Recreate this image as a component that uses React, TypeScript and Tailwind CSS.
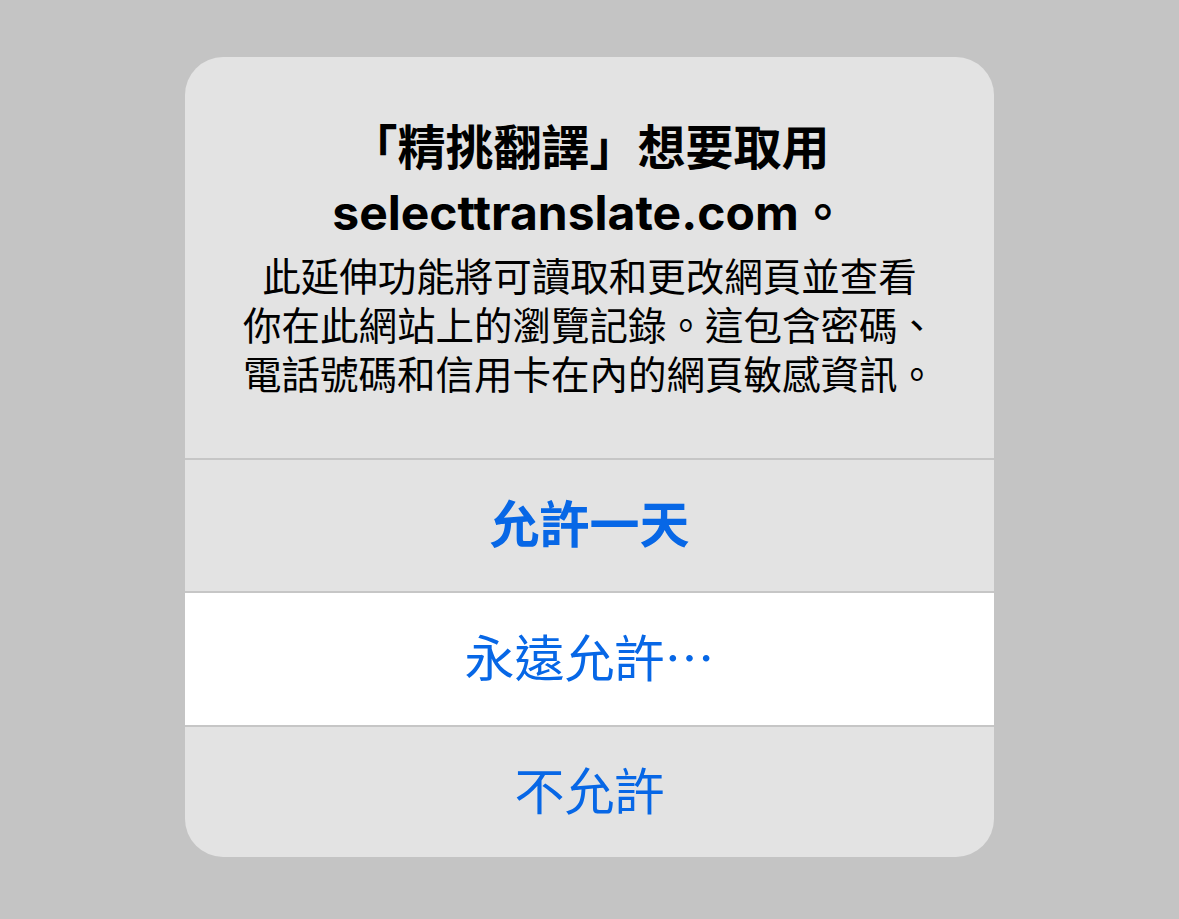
export default function App() {
  const font = { fontFamily: 'Inter, "Noto Sans CJK TC", sans-serif' };
  return (
    <div className="min-h-screen w-full bg-[#c4c4c4] flex justify-center pt-[57px]" style={font}>
      <div className="w-[809px] h-[800px] rounded-[38px] bg-[#e3e3e3] overflow-hidden flex flex-col">
        {/* Message */}
        <div className="px-6 pt-[58px] pb-[58px] text-center text-black">
          <h1 className="text-[48px] leading-[65px] font-bold">
            「精挑翻譯」想要取用
            <br />
            selecttranslate.com。
          </h1>
          <p className="mt-2 text-[38.5px] leading-[49px]">
            此延伸功能將可讀取和更改網頁並查看
            <br />
            你在此網站上的瀏覽記錄。這包含密碼、
            <br />
            電話號碼和信用卡在內的網頁敏感資訊。
          </p>
        </div>

        {/* Actions */}
        <div className="flex flex-col flex-1">
          <button className="h-[133px] border-t-2 border-[#c6c6c6] text-[50px] font-semibold text-[#0767e6]">
            允許一天
          </button>
          <button className="h-[134px] border-t-2 border-[#c6c6c6] bg-white text-[50px] text-[#0767e6]">
            永遠允許⋯
          </button>
          <button className="flex-1 border-t-2 border-[#c6c6c6] text-[50px] text-[#0767e6]">
            不允許
          </button>
        </div>
      </div>
    </div>
  );
}
